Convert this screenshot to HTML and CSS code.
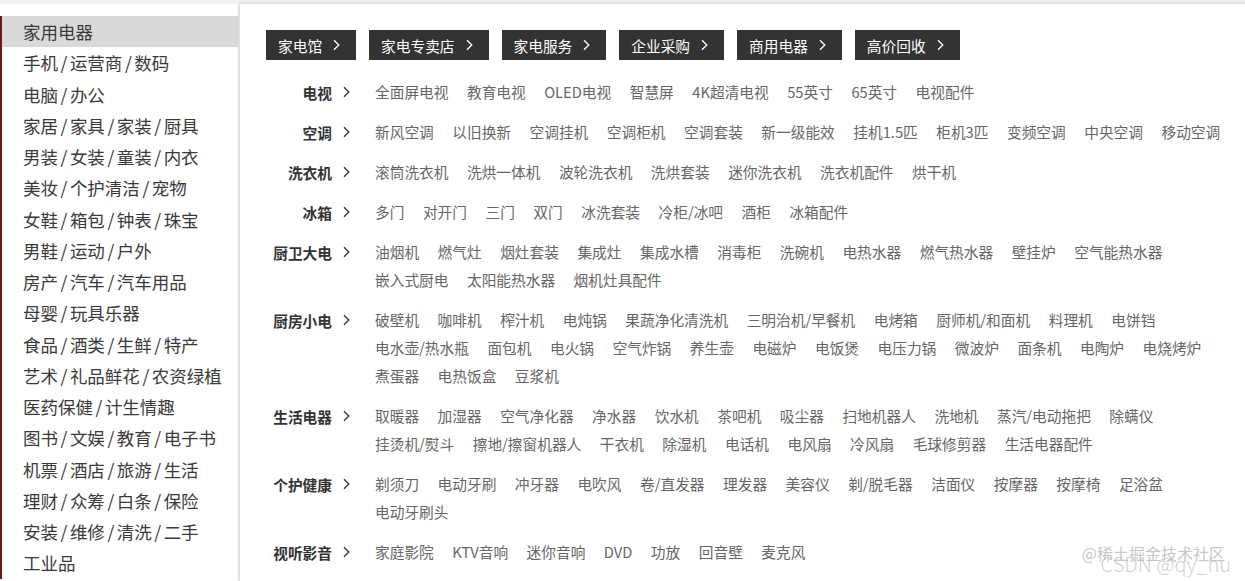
FILE: index.html
```html
<!DOCTYPE html>
<html lang="zh-CN">
<head>
<meta charset="utf-8">
<title>家用电器</title>
<link rel="stylesheet" href="styles.css">
</head>
<body>
<div class="page">
  <aside class="sidebar">
    <ul class="cats">
      <li class="cat active">家用电器</li>
      <li class="cat">手机<i class="sep">/</i>运营商<i class="sep">/</i>数码</li>
      <li class="cat">电脑<i class="sep">/</i>办公</li>
      <li class="cat">家居<i class="sep">/</i>家具<i class="sep">/</i>家装<i class="sep">/</i>厨具</li>
      <li class="cat">男装<i class="sep">/</i>女装<i class="sep">/</i>童装<i class="sep">/</i>内衣</li>
      <li class="cat">美妆<i class="sep">/</i>个护清洁<i class="sep">/</i>宠物</li>
      <li class="cat">女鞋<i class="sep">/</i>箱包<i class="sep">/</i>钟表<i class="sep">/</i>珠宝</li>
      <li class="cat">男鞋<i class="sep">/</i>运动<i class="sep">/</i>户外</li>
      <li class="cat">房产<i class="sep">/</i>汽车<i class="sep">/</i>汽车用品</li>
      <li class="cat">母婴<i class="sep">/</i>玩具乐器</li>
      <li class="cat">食品<i class="sep">/</i>酒类<i class="sep">/</i>生鲜<i class="sep">/</i>特产</li>
      <li class="cat">艺术<i class="sep">/</i>礼品鲜花<i class="sep">/</i>农资绿植</li>
      <li class="cat">医药保健<i class="sep">/</i>计生情趣</li>
      <li class="cat">图书<i class="sep">/</i>文娱<i class="sep">/</i>教育<i class="sep">/</i>电子书</li>
      <li class="cat">机票<i class="sep">/</i>酒店<i class="sep">/</i>旅游<i class="sep">/</i>生活</li>
      <li class="cat">理财<i class="sep">/</i>众筹<i class="sep">/</i>白条<i class="sep">/</i>保险</li>
      <li class="cat">安装<i class="sep">/</i>维修<i class="sep">/</i>清洗<i class="sep">/</i>二手</li>
      <li class="cat">工业品</li>
    </ul>
  </aside>
  <section class="panel">
    <div class="channels">
      <a class="channel">家电馆<svg class="chev" viewBox="0 0 7 12"><path d="M1 1.2 L5.8 6 L1 10.8"/></svg></a>
      <a class="channel">家电专卖店<svg class="chev" viewBox="0 0 7 12"><path d="M1 1.2 L5.8 6 L1 10.8"/></svg></a>
      <a class="channel">家电服务<svg class="chev" viewBox="0 0 7 12"><path d="M1 1.2 L5.8 6 L1 10.8"/></svg></a>
      <a class="channel">企业采购<svg class="chev" viewBox="0 0 7 12"><path d="M1 1.2 L5.8 6 L1 10.8"/></svg></a>
      <a class="channel">商用电器<svg class="chev" viewBox="0 0 7 12"><path d="M1 1.2 L5.8 6 L1 10.8"/></svg></a>
      <a class="channel">高价回收<svg class="chev" viewBox="0 0 7 12"><path d="M1 1.2 L5.8 6 L1 10.8"/></svg></a>
    </div>
    <dl class="groups">
      <div class="group">
        <dt class="label">电视<svg class="chev" viewBox="0 0 7 12"><path d="M1 1.2 L5.8 6 L1 10.8"/></svg></dt>
        <dd class="items"><a>全面屏电视</a><a>教育电视</a><a>OLED电视</a><a>智慧屏</a><a>4K超清电视</a><a>55英寸</a><a>65英寸</a><a>电视配件</a></dd>
      </div>
      <div class="group">
        <dt class="label">空调<svg class="chev" viewBox="0 0 7 12"><path d="M1 1.2 L5.8 6 L1 10.8"/></svg></dt>
        <dd class="items"><a>新风空调</a><a>以旧换新</a><a>空调挂机</a><a>空调柜机</a><a>空调套装</a><a>新一级能效</a><a>挂机1.5匹</a><a>柜机3匹</a><a>变频空调</a><a>中央空调</a><a>移动空调</a></dd>
      </div>
      <div class="group">
        <dt class="label">洗衣机<svg class="chev" viewBox="0 0 7 12"><path d="M1 1.2 L5.8 6 L1 10.8"/></svg></dt>
        <dd class="items"><a>滚筒洗衣机</a><a>洗烘一体机</a><a>波轮洗衣机</a><a>洗烘套装</a><a>迷你洗衣机</a><a>洗衣机配件</a><a>烘干机</a></dd>
      </div>
      <div class="group">
        <dt class="label">冰箱<svg class="chev" viewBox="0 0 7 12"><path d="M1 1.2 L5.8 6 L1 10.8"/></svg></dt>
        <dd class="items"><a>多门</a><a>对开门</a><a>三门</a><a>双门</a><a>冰洗套装</a><a>冷柜/冰吧</a><a>酒柜</a><a>冰箱配件</a></dd>
      </div>
      <div class="group">
        <dt class="label">厨卫大电<svg class="chev" viewBox="0 0 7 12"><path d="M1 1.2 L5.8 6 L1 10.8"/></svg></dt>
        <dd class="items"><a>油烟机</a><a>燃气灶</a><a>烟灶套装</a><a>集成灶</a><a>集成水槽</a><a>消毒柜</a><a>洗碗机</a><a>电热水器</a><a>燃气热水器</a><a>壁挂炉</a><a>空气能热水器</a><a>嵌入式厨电</a><a>太阳能热水器</a><a>烟机灶具配件</a></dd>
      </div>
      <div class="group">
        <dt class="label">厨房小电<svg class="chev" viewBox="0 0 7 12"><path d="M1 1.2 L5.8 6 L1 10.8"/></svg></dt>
        <dd class="items"><a>破壁机</a><a>咖啡机</a><a>榨汁机</a><a>电炖锅</a><a>果蔬净化清洗机</a><a>三明治机/早餐机</a><a>电烤箱</a><a>厨师机/和面机</a><a>料理机</a><a>电饼铛</a><a>电水壶/热水瓶</a><a>面包机</a><a>电火锅</a><a>空气炸锅</a><a>养生壶</a><a>电磁炉</a><a>电饭煲</a><a>电压力锅</a><a>微波炉</a><a>面条机</a><a>电陶炉</a><a>电烧烤炉</a><a>煮蛋器</a><a>电热饭盒</a><a>豆浆机</a></dd>
      </div>
      <div class="group">
        <dt class="label">生活电器<svg class="chev" viewBox="0 0 7 12"><path d="M1 1.2 L5.8 6 L1 10.8"/></svg></dt>
        <dd class="items"><a>取暖器</a><a>加湿器</a><a>空气净化器</a><a>净水器</a><a>饮水机</a><a>茶吧机</a><a>吸尘器</a><a>扫地机器人</a><a>洗地机</a><a>蒸汽/电动拖把</a><a>除螨仪</a><a>挂烫机/熨斗</a><a>擦地/擦窗机器人</a><a>干衣机</a><a>除湿机</a><a>电话机</a><a>电风扇</a><a>冷风扇</a><a>毛球修剪器</a><a>生活电器配件</a></dd>
      </div>
      <div class="group">
        <dt class="label">个护健康<svg class="chev" viewBox="0 0 7 12"><path d="M1 1.2 L5.8 6 L1 10.8"/></svg></dt>
        <dd class="items"><a>剃须刀</a><a>电动牙刷</a><a>冲牙器</a><a>电吹风</a><a>卷/直发器</a><a>理发器</a><a>美容仪</a><a>剃/脱毛器</a><a>洁面仪</a><a>按摩器</a><a>按摩椅</a><a>足浴盆</a><a>电动牙刷头</a></dd>
      </div>
      <div class="group">
        <dt class="label">视听影音<svg class="chev" viewBox="0 0 7 12"><path d="M1 1.2 L5.8 6 L1 10.8"/></svg></dt>
        <dd class="items"><a>家庭影院</a><a>KTV音响</a><a>迷你音响</a><a>DVD</a><a>功放</a><a>回音壁</a><a>麦克风</a></dd>
      </div>
    </dl>
  </section>
  <div class="watermark"><span class="wm1">@稀土掘金技术社区</span><span class="wm2">CSDN @qy_hu</span></div>
</div>
</body>
</html>
```

FILE: styles.css
```css
* { box-sizing: border-box; }
html, body {
  margin: 0;
  padding: 0;
  height: 100%;
  overflow: hidden;
}
body {
  background: #f2f2f2;
  font-family: "Noto Sans CJK SC", "Noto Sans", sans-serif;
  color: #333;
}
.page {
  position: relative;
  display: flex;
  align-items: flex-start;
  padding-top: 4px;
  height: 581px;
}
.sidebar {
  width: 238px;
  flex: none;
  background: #fff;
  height: 577px;
  padding-top: 12px;
}
.cats {
  list-style: none;
  margin: 0;
  padding: 0;
  border-left: 2px solid #6e1616;
}
.cat {
  height: 31.25px;
  line-height: 31.25px;
  padding-left: 21px;
  font-size: 17.5px;
  color: #3a3a3a;
  white-space: nowrap;
}
.cat.active {
  background: #d9d9d9;
}
.sep {
  font-style: normal;
  margin: 0 2.5px;
}
.panel {
  flex: 1;
  margin-left: 2px;
  height: 577px;
  background: #fff;
  box-shadow: 0 0 4px rgba(0, 0, 0, 0.22);
  padding: 26px 10px 0 26px;
}
.channels {
  display: flex;
  gap: 13px;
}
.channel {
  display: inline-flex;
  align-items: center;
  gap: 11px;
  height: 30px;
  padding: 0 16px 0 12px;
  background: #333;
  color: #fff;
  font-size: 14.7px;
  white-space: nowrap;
}
.chev {
  width: 7px;
  height: 12px;
  flex: none;
}
.chev path {
  fill: none;
  stroke: currentColor;
  stroke-width: 1.3;
}
.groups {
  margin: 18px 0 0;
  padding: 0;
}
.group {
  display: flex;
  align-items: flex-start;
  margin-bottom: 12px;
}
.label {
  width: 84px;
  flex: none;
  display: flex;
  align-items: center;
  justify-content: flex-end;
  gap: 11px;
  height: 28px;
  margin: 0 25px 0 0;
  font-size: 14.7px;
  font-weight: bold;
  color: #333;
  white-space: nowrap;
}
.items {
  flex: 1;
  margin: 0;
  display: flex;
  flex-wrap: wrap;
  column-gap: 18.5px;
}
.items a {
  line-height: 28px;
  font-size: 14.7px;
  color: #666;
  white-space: nowrap;
}
.watermark {
  position: absolute;
  right: 14px;
  bottom: 8px;
  width: 170px;
  height: 32px;
  pointer-events: none;
}
.wm1 {
  position: absolute;
  right: 6px;
  top: 0;
  font-size: 16px;
  color: rgba(150, 150, 150, 0.55);
  white-space: nowrap;
}
.wm2 {
  position: absolute;
  right: 0;
  top: 8px;
  font-size: 20px;
  font-weight: 300;
  color: rgba(170, 170, 170, 0.55);
  white-space: nowrap;
}
```
